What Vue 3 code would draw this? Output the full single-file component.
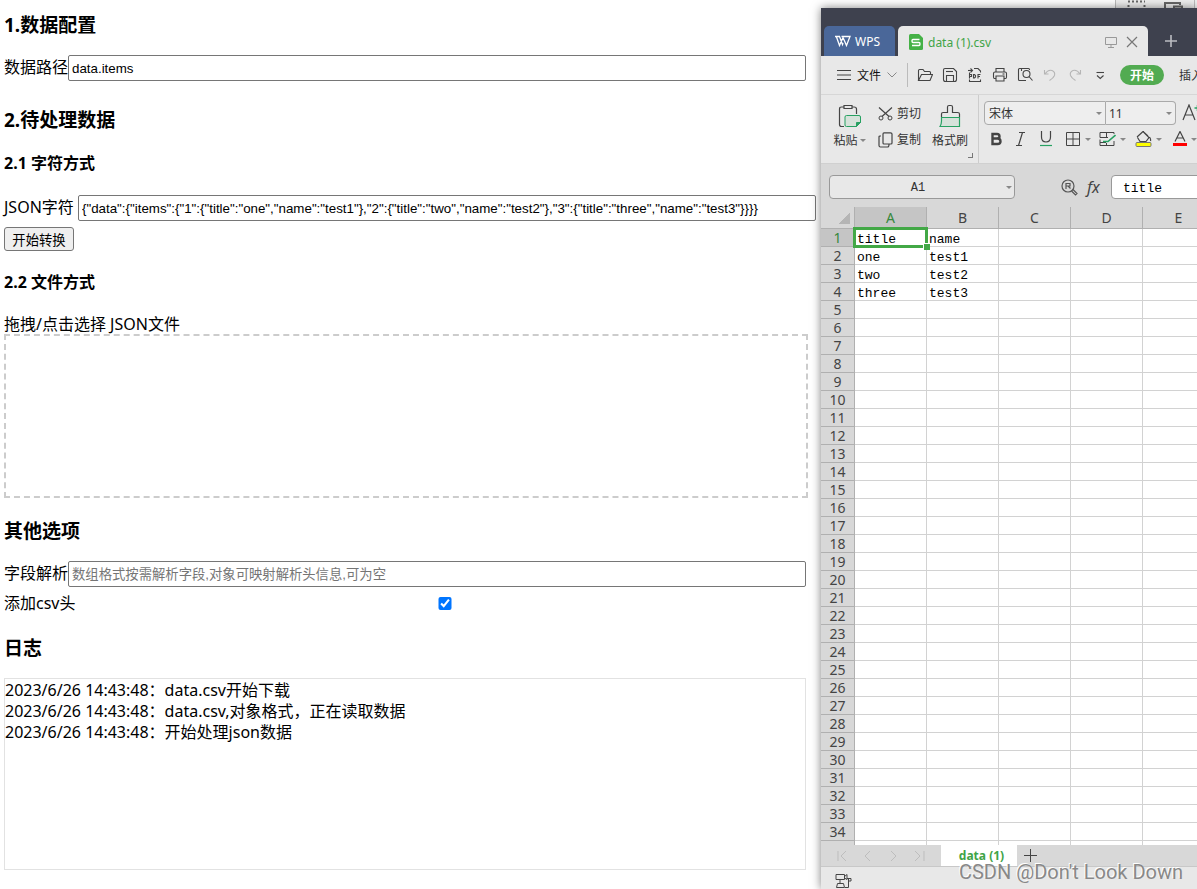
<script setup>
import { ref } from 'vue'

const dataPath = ref('data.items')
const jsonText = ref('{"data":{"items":{"1":{"title":"one","name":"test1"},"2":{"title":"two","name":"test2"},"3":{"title":"three","name":"test3"}}}}')
const fields = ref('')
const withHeader = ref(true)
const logs = [
  '2023/6/26 14:43:48：data.csv开始下载',
  '2023/6/26 14:43:48：data.csv,对象格式，正在读取数据',
  '2023/6/26 14:43:48：开始处理json数据',
]
const columns = ['A', 'B', 'C', 'D', 'E']
const cells = [['title', 'name'], ['one', 'test1'], ['two', 'test2'], ['three', 'test3']]
const rowCount = 35
const quickTools = [
  { name: '打开', d: ['M1.5 13.5V3.5Q1.5 2.5 2.5 2.5H6L7.5 4.5H12.5Q13.5 4.5 13.5 5.5V7', 'M1.500 13.500L4.500 7.500H15.500L13 13.500Z'] },
  { name: '保存', d: ['M3 1.500H11.500L14.500 4.500V12.500Q14.500 14.500 12.500 14.500H3.500Q1.500 14.500 1.500 12.500V3Q1.500 1.500 3 1.500Z', 'M4 4.500H11', 'M4.500 14V8.500H11.500V14'] },
  { name: '输出为PDF', d: ['M1 3.500H5', 'M3.500 1.500L5.500 3.500L3.500 5.500', 'M7 1.500H11L13.500 4V5.500', 'M2.500 7V5.500', 'M2.500 12.500V14.500H13.500V12.500', 'M2.500 11.500V7.500H4.500V9.500H2.500', 'M6.500 11V7.500H7.500L8.500 8.500V10L7.500 11Z', 'M11 11.500V7.500H13.500M11 9.500H13'] },
  { name: '打印', d: ['M4 5V1.500H12V5', 'M4 11.500H2.500Q1.500 11.500 1.500 10V6.500Q1.500 5 3 5H13Q14.500 5 14.500 6.500V10Q14.500 11.500 13.500 11.500H12', 'M4 9H12V14H4Z', 'M10.500 7H12.500'] },
  { name: '打印预览', d: ['M9 13.500H2.500Q1.500 13.500 1.500 12.500V2.500Q1.500 1.500 2.500 1.500H11.500Q12.500 1.500 12.500 2.500V3', 'M4.500 1.500V4', 'M9.500 3.500A3.500 3.500 0 1 1 9.500 10.500A3.500 3.500 0 1 1 9.500 3.500', 'M12 9.500L15.500 13.500'] },
  { name: '撤销', faded: true, d: ['M2.500 3V7H6.500', 'M3 7Q6 2.500 10 3.500Q13.500 5 12.500 8.500Q11.500 11 7.500 13.500'] },
  { name: '恢复', faded: true, d: ['M13.500 3V7H9.500', 'M13 7Q10 2.500 6 3.500Q2.500 5 3.500 8.500Q4.500 11 8.500 13.500'] },
  { name: '更多', d: ['M4.500 5.500H12', 'M5 8.500L8.250 11.500L11.500 8.500'] },
]
const sheetNav = [
  { name: '第一张', d: 'M3 2V12M11 2L6 7L11 12' },
  { name: '上一张', d: 'M9 2L4 7L9 12' },
  { name: '下一张', d: 'M4 2L9 7L4 12' },
  { name: '最后一张', d: 'M2 2L7 7L2 12M11 2V12' },
]
</script>

<template>
  <div class="screen">
    <main class="converter">
      <h3>1.数据配置</h3>
      <div class="field">
        <label for="path">数据路径</label><input id="path" v-model="dataPath" type="text" />
      </div>
      <h3 class="spaced">2.待处理数据</h3>
      <h4>2.1 字符方式</h4>
      <div class="field json">
        <label for="json">JSON字符</label><input id="json" v-model="jsonText" type="text" />
      </div>
      <button class="convert" type="button">开始转换</button>
      <h4>2.2 文件方式</h4>
      <label class="file-label" for="file">拖拽/点击选择 JSON文件</label>
      <div class="drop"><input id="file" type="file" accept=".json" /></div>
      <h3>其他选项</h3>
      <div class="field">
        <label for="fields">字段解析</label><input id="fields" v-model="fields" type="text" placeholder="数组格式按需解析字段,对象可映射解析头信息,可为空" />
      </div>
      <div class="field check">
        <label for="header">添加csv头</label><input id="header" v-model="withHeader" type="checkbox" />
      </div>
      <h3>日志</h3>
      <div class="log">
        <div v-for="line in logs" :key="line">{{ line }}</div>
      </div>
    </main>

    <aside class="side">
      <div class="behind">
        <svg width="82" height="8" viewBox="0 0 82 8" fill="none">
          <path d="M.5 0V8M79.500 0V8" stroke="#bbb" />
          <path d="M13 1.500H30M13.500 5V8M29.500 5V8" stroke="#666" stroke-width="2" stroke-dasharray="2 2" />
          <path d="M50 8V3H65V5M59 8V6.500H67V8" stroke="#666" stroke-width="2" />
        </svg>
      </div>
      <section class="window">
        <header class="titlebar">
          <button class="home" type="button">
            <svg width="16" height="12" viewBox="0 0 16 12" fill="none" stroke="#fff" stroke-width="1.300">
              <path d="M0 1.500H4.500L7.500 9.500L8 8M1.500 2L4.500 10.500L8 2.500M6.500 1.500H15L11.500 10.500L8 2.500" />
            </svg>WPS
          </button>
          <div class="doc">
            <svg width="14" height="16" viewBox="0 0 14 16">
              <path d="M1.500 0H10L14 4V14.500Q14 16 12.500 16H1.500Q0 16 0 14.500V1.500Q0 0 1.500 0Z" fill="#45b146" />
              <path d="M10.500 5.500H4Q3 5.500 3 7Q3 8.500 4 8.500H10Q11 8.500 11 10Q11 11.500 10 11.500H3" fill="none" stroke="#fff" stroke-width="1.400" />
            </svg>
            <span class="doc-name">data (1).csv</span>
            <button type="button" aria-label="在设备上显示"><svg width="12" height="12" viewBox="0 0 12 12" fill="none" stroke="#999"><path d="M.5 1.500H11.500V8.500H.500ZM6 8.500V11M3 11.500H9" /></svg></button>
            <button type="button" aria-label="关闭"><svg width="12" height="12" viewBox="0 0 12 12" fill="none" stroke="#777" stroke-width="1.200"><path d="M1 1L11 11M11 1L1 11" /></svg></button>
          </div>
          <button class="new" type="button" aria-label="新建"><svg width="12" height="12" viewBox="0 0 12 12" stroke="#bbbcc2" stroke-width="1.600"><path d="M6 0V12M0 6H12" /></svg></button>
        </header>

        <nav class="menu">
          <button class="file-menu" type="button">
            <svg width="14" height="10" viewBox="0 0 14 10" stroke="#444"><path d="M0 .5H14M0 5H14M0 9.500H14" /></svg>
            <span>文件</span>
            <svg width="10" height="6" viewBox="0 0 10 6" fill="none" stroke="#888"><path d="M.5 .5L5 5L9.500 .5" /></svg>
          </button>
          <button v-for="t in quickTools" :key="t.name" class="quick" :class="{ faded: t.faded }" type="button" :aria-label="t.name">
            <svg width="16" height="16" viewBox="0 0 16 16" fill="none" stroke="currentColor" stroke-width="1.100">
              <path v-for="p in t.d" :key="p" :d="p" />
            </svg>
          </button>
          <button class="start" type="button">开始</button>
          <button class="insert" type="button">插入</button>
        </nav>

        <div class="ribbon">
          <button class="big paste" type="button">
            <svg width="24" height="24" viewBox="0 0 24 24" fill="none" stroke="#444">
              <path d="M6 22.500H3.500Q1.500 22.500 1.500 20.500V5Q1.500 3 3.500 3H6M14 3H16Q18.500 3 18.500 5V10" stroke-width="1.200" />
              <path d="M6 1.500H14V4.500H6Z" stroke-width="1.200" />
              <path d="M8.500 11.500H21Q22.500 11.500 22.500 13V18.500L18.500 22.500H8.500Q7 22.500 7 21V13Q7 11.500 8.500 11.500Z" fill="#d6e2da" stroke="#27a162" />
              <path d="M22.500 18.500H18.500V22.500Z" fill="#27a162" stroke="#27a162" />
            </svg>
            <span>粘贴<i class="caret"></i></span>
          </button>
          <div class="small-col">
            <button type="button">
              <svg width="15" height="14" viewBox="0 0 15 14" fill="none" stroke="#444"><path d="M1 .5L11 9.500M14 .5L4 9.500" stroke-width="1.200" /><circle cx="3" cy="11" r="2" /><circle cx="12" cy="11" r="2" /></svg>剪切
            </button>
            <button type="button">
              <svg width="15" height="16" viewBox="0 0 15 16" fill="none" stroke="#444" stroke-width="1.200"><path d="M6 .8H12.500Q14 .8 14 2V11Q14 12 13 12H6Q5 12 5 11V2Q5 .8 6 .8ZM3 4H2Q1 4 1 5V13.500Q1 15 2.500 15H9.500Q11 15 11 12.500" /></svg>复制
            </button>
          </div>
          <button class="big brush" type="button">
            <svg width="22" height="24" viewBox="0 0 22 24" fill="none" stroke="#444" stroke-width="1.200">
              <path d="M2.500 13V10Q2.500 8.500 4 8.500H8.500V3Q8.500 1.500 10 1.500H12Q13.500 1.500 13.500 3V8.500H18.500Q20.500 8.500 20.500 10V13" />
              <path d="M2.500 13.500H20.500V22.500H1Q2.500 20 2.500 17Z" fill="#d6e2da" stroke="#27a162" />
            </svg>
            <span>格式刷</span>
            <i class="corner"></i>
          </button>
          <div class="font-group">
            <div class="pickers">
              <div class="picker"><select aria-label="字体"><option>宋体</option></select><i class="caret"></i></div>
              <div class="picker size"><select aria-label="字号"><option>11</option></select><i class="caret"></i></div>
              <button class="grow" type="button" aria-label="增大字号"><svg width="20" height="18" viewBox="0 0 20 18" fill="none" stroke="#444" stroke-width="1.200"><path d="M1 16L7 1L13 16M3 11H11" /><path d="M15.500 1V7M12.500 4H18.500" stroke="#27a162" stroke-width="1.500" /></svg></button>
            </div>
            <div class="styles">
              <button type="button" aria-label="加粗"><svg width="12" height="14" viewBox="0 0 12 14" fill="none" stroke="#444" stroke-width="2.400"><path d="M2.500 2H7Q9.500 2 9.500 4.500Q9.500 6.500 7 6.500H2.500ZM2.500 6.500H7.500Q10.500 6.500 10.500 9.500Q10.500 12 7.500 12H2.500Z" /></svg></button>
              <button type="button" aria-label="倾斜"><svg width="12" height="16" viewBox="0 0 12 16" fill="none" stroke="#444" stroke-width="1.200"><path d="M4 1.500H10M1 14.500H7M7.500 1.500L3.500 14.500" /></svg></button>
              <button type="button" aria-label="下划线"><svg width="12" height="16" viewBox="0 0 12 16" fill="none" stroke="#444" stroke-width="1.200"><path d="M1.500 0V6Q1.500 11 6 11Q10.500 11 10.500 6V0" /><path d="M0 14.500H12" stroke="#27a162" /></svg></button>
              <span class="wides">
                <button type="button" aria-label="边框"><svg width="16" height="16" viewBox="0 0 16 16" fill="none" stroke="#444"><path d="M1.500 1.500H14.500V14.500H1.500ZM8 1.500V14.500M1.500 8H14.500" /></svg><i class="caret"></i></button>
                <button type="button" aria-label="绘制边框"><svg width="17" height="16" viewBox="0 0 17 16" fill="none" stroke="#444"><path d="M15 3V1.500H1V6.500H9M7.500 1.500V6M1 11.500H7M1 8.500V14.500H15V10M7.500 12V14" /><path d="M16.500 4L9 10.500H4" stroke="#27a162" stroke-width="1.600" /></svg><i class="caret"></i></button>
                <button class="fill" type="button" aria-label="填充颜色"><svg width="17" height="16" viewBox="0 0 17 16" fill="none" stroke="#444"><path d="M2 6L8 .5L14 6.500L11 10.500H5L2.500 6.500M8 .5L13 5M14.500 6Q16 8 15.500 10" stroke-width="1.200" /><rect x="1" y="11.500" width="15" height="4" rx="1" fill="#ff0" stroke="#777" /></svg><i class="caret"></i></button>
                <button type="button" aria-label="字体颜色"><svg width="14" height="16" viewBox="0 0 14 16" fill="none" stroke="#444" stroke-width="1.200"><path d="M2 10.500L7 .5L12 10.500M4 7H10" /><path d="M0 13.500H14" stroke="#f00" stroke-width="3" /></svg><i class="caret"></i></button>
              </span>
            </div>
          </div>
        </div>

        <div class="formula">
          <div class="name-box"><input type="text" value="A1" aria-label="名称框" /><i class="caret"></i></div>
          <svg width="17" height="17" viewBox="0 0 17 17" fill="none" stroke="#555" stroke-width="1.200"><circle cx="7" cy="7" r="6" /><path d="M5 10V4.500H9V7H5M7 7L9.500 9.500M12 10.500L16 14.500L14.500 16L10.500 12" /></svg>
          <span class="fx">fx</span>
          <input class="formula-input" type="text" value="title" aria-label="编辑栏" />
        </div>

        <div class="sheet">
          <table>
            <thead>
              <tr>
                <th class="select-all"></th>
                <th v-for="(c, i) in columns" :key="c" :class="{ on: i === 0 }">{{ c }}</th>
              </tr>
            </thead>
            <tbody>
              <tr v-for="r in rowCount" :key="r">
                <th :class="{ on: r === 1 }">{{ r }}</th>
                <td v-for="(c, i) in columns" :key="c" :class="{ active: r === 1 && i === 0 }">{{ cells[r - 1]?.[i] }}</td>
              </tr>
            </tbody>
          </table>
        </div>

        <div class="tabs">
          <div class="nav">
            <button v-for="n in sheetNav" :key="n.name" type="button" :aria-label="n.name">
              <svg width="13" height="14" viewBox="0 0 13 14" fill="none" stroke="#bdbdbd"><path :d="n.d" /></svg>
            </button>
          </div>
          <button class="tab" type="button">data (1)</button>
          <button class="add" type="button" aria-label="新建工作表"><svg width="13" height="13" viewBox="0 0 13 13" stroke="#444"><path d="M6.500 0V13M0 6.500H13" /></svg></button>
        </div>
        <footer class="status">
          <svg width="18" height="16" viewBox="0 0 18 16" fill="none" stroke="#444"><path d="M1 1.500H9.500V6.500H1ZM9.500 3.500L12 1.500V6.500L9.500 5M5 6.500V10M2.500 10.500H8.500L9.500 14.500H1.500ZM10 14.500H13.500V6M12 5.500H16V8H13.500" /></svg>
        </footer>
      </section>
    </aside>
    <div class="watermark">CSDN @Don't Look Down</div>
  </div>
</template>

<style>
body { background: #fff; }
</style>

<style scoped>
.screen {
  position: relative;
  display: grid;
  grid-template-columns: minmax(0, 1fr) 376px;
  height: 100vh;
  min-height: 640px;
  overflow: hidden;
  color: #000;
  font: 16px/21px "Noto Sans", "Noto Sans CJK SC", sans-serif;
}
.screen * { box-sizing: border-box; }
.window button, .window select { font: inherit; color: inherit; }
button { display: flex; align-items: center; justify-content: center; padding: 0; border: 0; background: none; }
svg { display: block; flex: none; }

.converter { padding: 13px 17px 0 4px; }
h3, h4 { font-weight: 700; }
h3 { margin: 21px 0 17px; font-size: 19px; line-height: 25px; }
h3:first-child { margin-top: 0; }
h3.spaced { margin-top: 27px; margin-bottom: 20px; }
h4 { margin: 20px 0 21px; font-size: 16px; line-height: 21px; }
h4:has(+ .file-label) { margin: 21px 0; }
.field { display: flex; align-items: center; white-space: nowrap; }
.field label { padding-bottom: 2px; }
.json label { min-width: 74px; }
.field input { flex: none; width: calc(100% - 62px); margin: 0; }
.field input[type="text"] {
  height: 26px;
  padding: 1px 3px;
  border: 1px solid #767676;
  border-radius: 2px;
  background: #fff;
  font-family: "Liberation Sans", "Noto Sans CJK SC", sans-serif;
}
.field input::placeholder { color: #757575; }
.check { margin-top: 6px; }
.check label { min-width: 72px; padding: 0; }
.check input { height: 13px; }
.convert {
  width: 70px;
  height: 24px;
  margin-top: 6px;
  border: 1px solid #767676;
  border-radius: 3px;
  background: #efefef;
  color: #000;
  font-family: "Noto Sans CJK SC", sans-serif;
}
.file-label { display: block; line-height: 20px; }
.drop { width: calc(100% + 4px); height: 164px; border: 2px dashed #ccc; }
.drop input { display: block; width: 100%; height: 100%; opacity: 0; }
.check + h3 { margin-top: 22px; }
.log { width: calc(100% + 2px); height: 192px; padding: 1px 0; border: 1px solid #e2e2e2; }

.side { display: flex; flex-direction: column; min-width: 0; min-height: 0; }
.behind { display: flex; justify-content: flex-end; height: 8px; flex: none; }
.behind svg { background: #eee; }
.window {
  position: relative;
  display: flex;
  flex-direction: column;
  flex: 1;
  min-height: 0;
  background: #e8e8e8;
  box-shadow: 0 0 9px rgba(0, 0, 0, .5);
  color: #333;
  font-size: 12px;
}
.window > * { overflow: hidden; }
.titlebar { display: flex; align-items: flex-end; flex: none; height: 48px; padding-left: 3px; background: #3e414e; }
.window .home { width: 71px; height: 30px; gap: 4px; padding-right: 4px; border-radius: 5px 5px 0 0; background: #4a6799; color: #fff; }
.doc {
  display: flex;
  align-items: center;
  width: 250px;
  height: 30px;
  margin-left: 3px;
  padding: 2px 10px 0 11px;
  border-radius: 5px 5px 0 0;
  background: #e8e8e8;
}
.doc-name { flex: 1; margin-left: 5px; color: #3fa447; }
.doc button { margin-left: 9px; }
.new { width: 46px; height: 30px; }

.menu { display: flex; align-items: center; flex: none; height: 39px; border-bottom: 1px solid #d6d6d6; white-space: nowrap; }
.window .file-menu { height: 24px; width: 87px; flex: none; gap: 6px; padding-left: 6px; border-right: 1px solid #bbb; color: #111; }
.window .quick { width: 25px; flex: none; color: #444; }
.file-menu + .quick { margin-left: 4px; }
.window .faded { color: #b5b5b5; }
.window .start { flex: none; width: 44px; height: 20px; margin-left: 8px; border-radius: 10px; background: #52ab51; color: #fff; font-weight: 700; }
.insert { flex: none; margin-left: 15px; }

.ribbon { display: flex; flex: none; height: 69px; border-bottom: 1px solid #d0d0d0; white-space: nowrap; }
.caret { display: inline-block; flex: none; width: 0; height: 0; border: 3px solid transparent; border-top-color: #888; border-bottom: 0; }
.window .big { flex-direction: column; justify-content: flex-start; gap: 4px; padding-top: 9px; line-height: 17px; }
.paste { width: 57px; }
.big .caret { margin: 0 0 3px 2px; }
.small-col { display: flex; flex-direction: column; gap: 9px; width: 44px; padding-top: 10px; }
.small-col button { gap: 4px; height: 17px; justify-content: flex-start; }
.brush { position: relative; width: 57px; border-right: 1px solid #ccc; }
.corner { position: absolute; right: 5px; bottom: 5px; width: 5px; height: 5px; border: solid #777; border-width: 0 1px 1px 0; }
.font-group { flex: 1; min-width: 0; padding: 6px 0 0 5px; }
.pickers, .styles, .wides { display: flex; align-items: center; }
.picker { display: flex; align-items: center; flex: none; width: 122px; height: 24px; padding-right: 3px; border: 1px solid #aaa; border-radius: 4px 0 0 4px; background: #eee; }
.picker.size { width: 70px; border-left: 0; border-radius: 0 4px 4px 0; }
.picker select { flex: 1; min-width: 0; padding: 0 0 0 4px; border: 0; background: none; appearance: none; }
.size select { padding-left: 3px; }
.grow { flex: none; margin-left: 6px; }
.styles { height: 16px; margin: 6px 0 0 -1px; }
.styles button { flex: none; width: 25px; }
.wides { margin-left: 2px; }
.wides button { width: 35px; gap: 4px; }
.wides .fill { width: 37px; }

.formula {
  display: flex;
  align-items: center;
  flex: none;
  height: 43px;
  padding: 3px 0 0 8px;
  background: #d8d8d8;
}
.formula > * { flex: none; }
.name-box { display: flex; align-items: center; width: 186px; height: 24px; margin-right: 46px; padding-right: 2px; border: 1px solid #999; border-radius: 4px; background: #e8e8e8; }
.name-box input { flex: 1; min-width: 0; padding: 2px 0 0; border: 0; background: none; color: #333; text-align: center; font: 12px "Liberation Mono", monospace; }
.fx { width: 24px; margin-left: 9px; color: #444; font: italic 16px/20px "Noto Sans", sans-serif; }
.formula-input { width: 240px; height: 24px; padding: 2px 11px 0; border: 1px solid #999; border-radius: 4px; background: #fff; color: #000; font: 13px "Liberation Mono", monospace; }

.sheet { flex: 1; min-height: 0; background: #fff; }
table { width: 394px; table-layout: fixed; border-collapse: separate; border-spacing: 0; }
th, td { height: 18px; padding: 0; white-space: nowrap; }
th { border-right: 1px solid #b0b0b0; border-bottom: 1px solid #b0b0b0; background: #d8d8d8; color: #444; font-size: 14px; font-weight: 400; line-height: 17px; text-align: center; }
thead th { width: 72px; height: 22px; line-height: 21px; }
thead th.select-all { width: 34px; background: linear-gradient(135deg, transparent 50%, #b5b5b5 50%) right 4px bottom 4px / 12px 12px no-repeat #d8d8d8; }
th.on { background: #c5c5c5; color: #36883c; }
td { position: relative; border-right: 1px solid #d2d2d2; border-bottom: 1px solid #d2d2d2; padding: 5px 0 0 2px; color: #000; font: 13px/12px "Liberation Mono", monospace; }
.active::before { content: ""; position: absolute; inset: -2px; border: 3px solid #42a846; }
.active::after { content: ""; position: absolute; right: -4px; bottom: -4px; width: 6px; height: 6px; border: solid #fff; border-width: 1px 0 0 1px; background: #42a846; z-index: 1; }

.tabs { display: flex; flex: none; height: 22px; border-bottom: 1px solid #c8c8c8; background: #d8d8d8; }
.nav { display: flex; align-items: center; width: 120px; padding-left: 7px; }
.nav button { width: 26px; }
.window .tab { width: 76px; padding-left: 5px; background: #fff; color: #3fa447; font-weight: 700; line-height: 16px; }
.add { width: 27px; }
.status { display: flex; align-items: center; flex: none; height: 22px; padding: 6px 0 0 14px; }
.watermark {
  position: absolute;
  right: 14px;
  bottom: 8px;
  color: #888;
  font: 20px/18px Roboto, "Liberation Sans", sans-serif;
  text-shadow: -1px -1px 0 #fff;
}
</style>
